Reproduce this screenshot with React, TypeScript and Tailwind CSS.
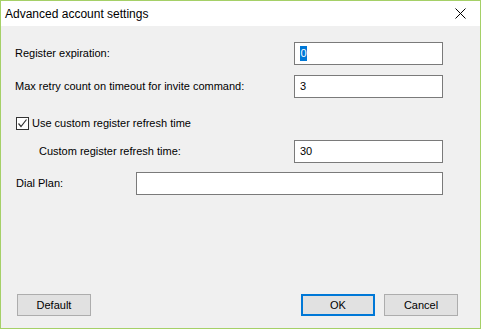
import * as React from "react";

function TextBox({ value, selected, className }: { value?: string; selected?: boolean; className: string }) {
  return (
    <div className={`h-[23px] border border-[#7a7a7a] bg-white flex items-center pl-[5px] ${className}`}>
      {selected ? (
        <span className="bg-[#0078d7] text-white leading-[15px] px-[0.5px]">{value}</span>
      ) : (
        <span className="text-black">{value}</span>
      )}
    </div>
  );
}

function Button({ label, focused }: { label: string; focused?: boolean }) {
  return (
    <div
      className={`w-[74px] h-[22px] flex items-center justify-center bg-[#e1e1e1] text-black ${
        focused ? "border-2 border-[#0078d7]" : "border border-[#adadad]"
      }`}
    >
      {label}
    </div>
  );
}

export default function App() {
  return (
    <div
      className="w-[481px] h-[329px] border border-[#a5d067] bg-[#f0f0f0] flex flex-col text-[11px] text-black"
      style={{ fontFamily: '"Liberation Sans", Arial, sans-serif' }}
    >
      {/* title bar */}
      <div className="h-[25px] bg-white flex items-center justify-between pl-[4px] pr-[14px]">
        <span className="text-[12px]">Advanced account settings</span>
        <svg width="11" height="11" viewBox="0 0 11 11">
          <path d="M0.5 0.5 L10.5 10.5 M10.5 0.5 L0.5 10.5" stroke="#000" strokeWidth="1" fill="none" />
        </svg>
      </div>

      <div className="flex flex-col flex-1 pl-[14px] pr-[37px] pt-[16px]">
        <div className="flex items-center justify-between">
          <span>Register expiration:</span>
          <TextBox value="0" selected className="w-[149px]" />
        </div>
        <div className="flex items-center justify-between mt-[10px]">
          <span>Max retry count on timeout for invite command:</span>
          <TextBox value="3" className="w-[149px]" />
        </div>

        <label className="flex items-center h-[13px] mt-[19px] ml-[1px]">
          <span className="w-[13px] h-[13px] border border-[#333] bg-white flex items-center justify-center">
            <svg width="11" height="11" viewBox="0 0 11 11">
              <path d="M1.5 5.5 L4 8.5 L9.5 1.5" stroke="#333" strokeWidth="1.2" fill="none" />
            </svg>
          </span>
          <span className="ml-[3px]">Use custom register refresh time</span>
        </label>

        <div className="flex items-center justify-between mt-[10px]">
          <span className="ml-[24px]">Custom register refresh time:</span>
          <TextBox value="30" className="w-[149px]" />
        </div>
        <div className="flex items-center justify-between mt-[9px]">
          <span className="ml-[1px]">Dial Plan:</span>
          <TextBox className="w-[307px]" />
        </div>

        <div className="flex-1" />

        <div className="flex items-center mb-[12px] ml-[2px]">
          <Button label="Default" />
          <div className="flex-1" />
          <div className="flex gap-[9px] -mr-[15px]">
            <Button label="OK" focused />
            <Button label="Cancel" />
          </div>
        </div>
      </div>
    </div>
  );
}
